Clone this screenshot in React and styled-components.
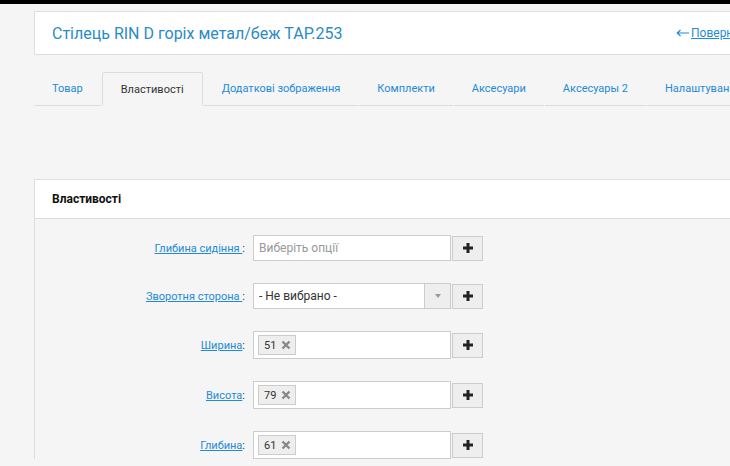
import React from 'react'
import styled, { createGlobalStyle } from 'styled-components'

const GlobalStyle = createGlobalStyle`
  html, body {
    margin: 0;
    padding: 0;
    background: #f5f5f5;
    font-family: Roboto, "Liberation Sans", Arial, sans-serif;
    overflow: hidden;
  }
`

const TopBar = styled.div`
  height: 4px;
  background: #000;
`

const Page = styled.div`
  width: 800px;
  padding-left: 34px;
`

const TitleCard = styled.div`
  margin-top: 7px;
  height: 44px;
  box-sizing: border-box;
  background: #fff;
  border: 1px solid #ddd;
  border-right: none;
  display: flex;
  align-items: center;
  padding-left: 17px;
`

const Title = styled.h1`
  margin: 0;
  flex: 1;
  font-size: 16px;
  font-weight: 400;
  color: #2a8bc6;
`

const BackLink = styled.a`
  font-size: 12px;
  color: #1e8ad8;
  width: 158px;
  white-space: nowrap;
  display: flex;
  align-items: center;
  gap: 2px;
  span {
    text-decoration: underline;
  }
`

const Arrow = styled.svg`
  flex: none;
`

const Tabs = styled.div`
  margin-top: 17px;
  display: flex;
`

const Tab = styled.div`
  height: 34px;
  box-sizing: border-box;
  padding: 0 18px;
  margin-right: 1px;
  display: flex;
  align-items: center;
  font-size: 11px;
  white-space: nowrap;
  color: ${p => (p.$active ? '#333' : '#1e8ad8')};
  border-bottom: 1px solid ${p => (p.$active ? 'transparent' : '#ddd')};
  ${p => p.$active && `
    border-top: 1px solid #ddd;
    border-left: 1px solid #ddd;
    border-right: 1px solid #ddd;
    border-radius: 2px 2px 0 0;
  `}
`

const Panel = styled.div`
  margin-top: 73px;
  border: 1px solid #ddd;
  border-right: none;
  border-bottom: none;
`

const PanelHeader = styled.div`
  height: 38px;
  background: #fff;
  border-bottom: 1px solid #ddd;
  display: flex;
  align-items: center;
  padding-left: 17px;
  font-size: 12px;
  font-weight: 700;
  color: #111;
`

const PanelBody = styled.div`
  background: #f5f5f5;
  padding-top: 16px;
  display: flex;
  flex-direction: column;
  gap: 22px;
`

const Row = styled.div`
  display: grid;
  grid-template-columns: 210px 198px 31px;
  column-gap: 8px;
  align-items: center;
`

const Label = styled.div`
  text-align: right;
  font-size: 11px;
  color: #333;
  a {
    color: #1e8ad8;
    text-decoration: underline;
  }
`

const Control = styled.div`
  grid-column: 2 / 4;
  display: flex;
  align-items: center;
`

const Field = styled.div`
  width: 198px;
  height: ${p => (p.$tall ? 28 : 26)}px;
  box-sizing: border-box;
  background: #fff;
  border: 1px solid #ccc;
  display: flex;
  align-items: center;
  padding-left: ${p => (p.$tall ? 4 : 5)}px;
  font-size: 12px;
  color: ${p => (p.$muted ? '#999' : '#333')};
`

const SelectText = styled.span`
  flex: 1;
`

const Caret = styled.div`
  width: 25px;
  align-self: stretch;
  background: #eee;
  border-left: 1px solid #ccc;
  display: flex;
  align-items: center;
  justify-content: center;
  &::after {
    content: '';
    border-left: 3px solid transparent;
    border-right: 3px solid transparent;
    border-top: 4px solid #999;
  }
`

const Chip = styled.span`
  height: 20px;
  box-sizing: border-box;
  padding: 0 4px 0 5px;
  display: inline-flex;
  align-items: center;
  gap: 5px;
  background: #eee;
  border: 1px solid #ccc;
  font-size: 11px;
  color: #333;
`

const AddButton = styled.button`
  width: 31px;
  height: 25px;
  margin-left: 1px;
  padding: 0;
  background: #eee;
  border: 1px solid #ccc;
  display: flex;
  align-items: center;
  justify-content: center;
`

const Plus = () => (
  <svg width="10" height="10" viewBox="0 0 10 10">
    <rect x="3.5" y="0" width="3" height="10" fill="#222" />
    <rect x="0" y="3.5" width="10" height="3" fill="#222" />
  </svg>
)

const Cross = () => (
  <svg width="10" height="10" viewBox="0 0 10 10">
    <path d="M1.5 1.5 L8.5 8.5 M8.5 1.5 L1.5 8.5" stroke="#888" strokeWidth="2.4" />
  </svg>
)

const tabs = ['Товар', 'Властивості', 'Додаткові зображення', 'Комплекти', 'Аксесуари', 'Аксесуары 2', 'Налаштування']

const tagRows = [
  { label: 'Ширина', value: '51' },
  { label: 'Висота', value: '79' },
  { label: 'Глибина', value: '61' },
]

export default function App() {
  return (
    <>
      <GlobalStyle />
      <TopBar />
      <Page>
        <TitleCard>
          <Title>Стілець RIN D горіх метал/беж TAP.253</Title>
          <BackLink>
            <Arrow width="13" height="8" viewBox="0 0 13 8">
              <path d="M13 4 H1.5 M4.5 1 L1.2 4 L4.5 7" stroke="#1e8ad8" strokeWidth="1.2" fill="none" />
            </Arrow>
            <span>Повернутися</span>
          </BackLink>
        </TitleCard>

        <Tabs>
          {tabs.map(t => (
            <Tab key={t} $active={t === 'Властивості'}>{t}</Tab>
          ))}
        </Tabs>

        <Panel>
          <PanelHeader>Властивості</PanelHeader>
          <PanelBody>
            <Row>
              <Label><a>Глибина сидіння </a>:</Label>
              <Control>
                <Field $muted>Виберіть опції</Field>
                <AddButton><Plus /></AddButton>
              </Control>
            </Row>
            <Row>
              <Label><a>Зворотня сторона </a>:</Label>
              <Control>
                <Field>
                  <SelectText>- Не вибрано -</SelectText>
                  <Caret />
                </Field>
                <AddButton><Plus /></AddButton>
              </Control>
            </Row>
            {tagRows.map(r => (
              <Row key={r.label}>
                <Label><a>{r.label}</a>:</Label>
                <Control>
                  <Field $tall>
                    <Chip>{r.value}<Cross /></Chip>
                  </Field>
                  <AddButton><Plus /></AddButton>
                </Control>
              </Row>
            ))}
          </PanelBody>
        </Panel>
      </Page>
    </>
  )
}
